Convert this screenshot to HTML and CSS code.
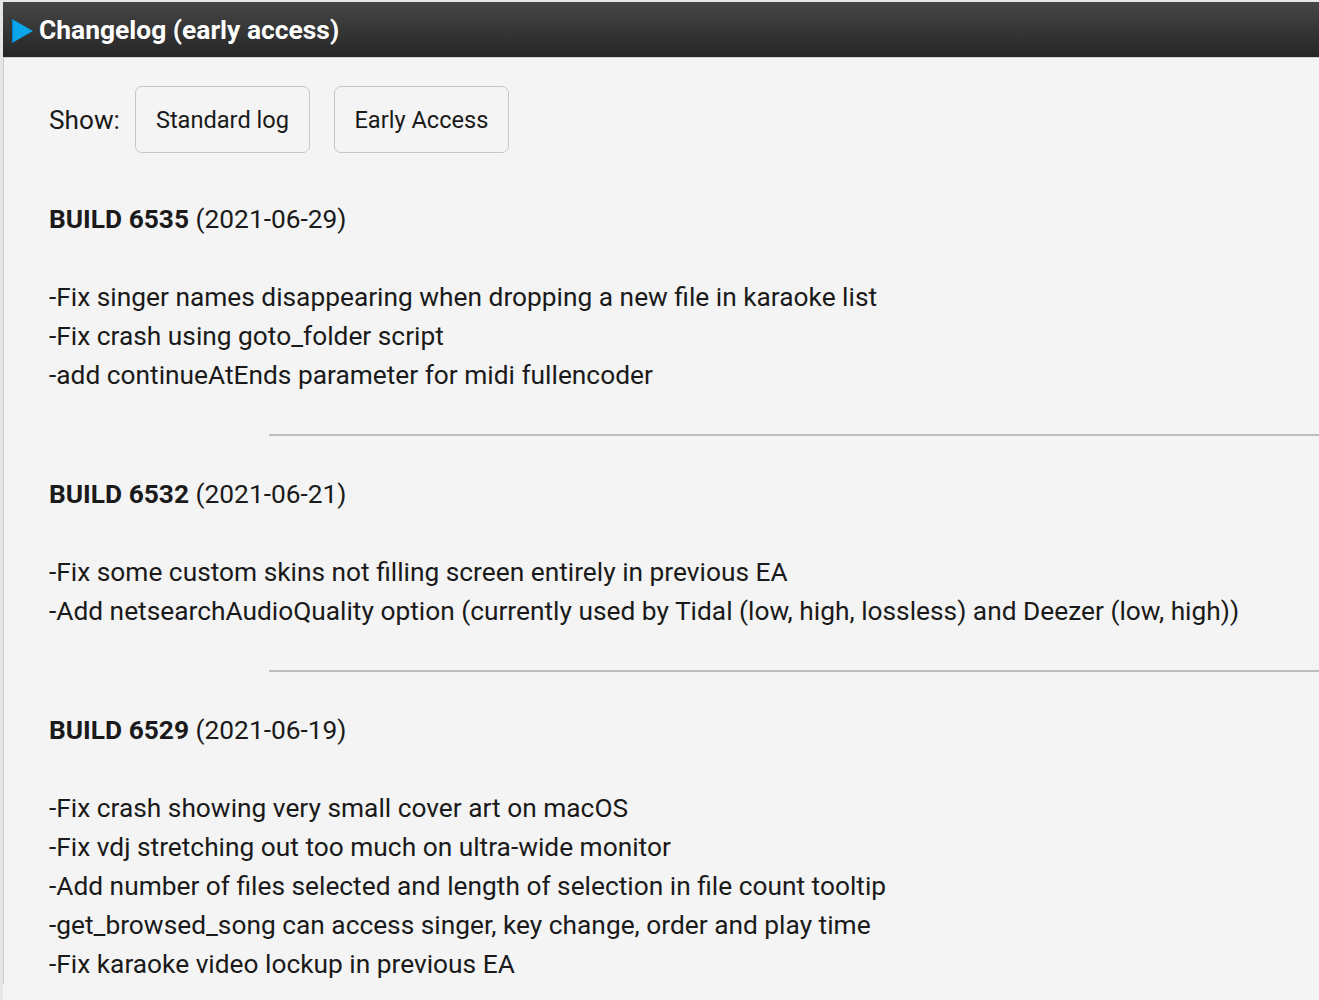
FILE: index.html
```html
<!DOCTYPE html>
<html>
<head>
<meta charset="utf-8">
<link rel="stylesheet" href="styles.css">
</head>
<body>
<div class="panel">
  <div class="header">
    <svg class="tri" width="22" height="24" viewBox="0 0 22 24"><polygon points="0,0 21,12 0,24" fill="#0aa6ea"/><rect x="0" y="0" width="1.2" height="24" fill="#0a7fd0"/></svg>
    <span class="title">Changelog (early access)</span>
  </div>
  <div class="content">
    <div class="show">
      <span class="show-label">Show:</span>
      <button class="btn">Standard log</button>
      <button class="btn">Early Access</button>
    </div>
    <div class="build first">
      <p class="head"><b>BUILD 6535</b> (2021-06-29)</p>
      <p class="items">-Fix singer names disappearing when dropping a new file in karaoke list<br>-Fix crash using goto_folder script<br>-add continueAtEnds parameter for midi fullencoder</p>
    </div>
    <hr class="sep">
    <div class="build">
      <p class="head"><b>BUILD 6532</b> (2021-06-21)</p>
      <p class="items">-Fix some custom skins not filling screen entirely in previous EA<br>-Add netsearchAudioQuality option (currently used by Tidal (low, high, lossless) and Deezer (low, high))</p>
    </div>
    <hr class="sep">
    <div class="build">
      <p class="head"><b>BUILD 6529</b> (2021-06-19)</p>
      <p class="items">-Fix crash showing very small cover art on macOS<br>-Fix vdj stretching out too much on ultra-wide monitor<br>-Add number of files selected and length of selection in file count tooltip<br>-get_browsed_song can access singer, key change, order and play time<br>-Fix karaoke video lockup in previous EA</p>
    </div>
  </div>
</div>
</body>
</html>
```

FILE: styles.css
```css
html, body {
  margin: 0;
  padding: 0;
  background: #e6e6e6;
  overflow: hidden;
}
body {
  padding: 2px 0 0 3px;
  font-family: Roboto, "Liberation Sans", sans-serif;
  color: #1a1a1a;
}
.panel {
  background: #f4f4f4;
  min-height: 1000px;
}
.header {
  height: 56px;
  background: linear-gradient(#464646, #262626);
  border-bottom: 1px solid #cfcfcf;
  display: flex;
  align-items: center;
  padding-left: 9px;
  box-sizing: border-box;
}
.tri {
  display: block;
  margin-right: 5px;
  margin-top: 2px;
}
.title {
  color: #fff;
  font-weight: bold;
  font-size: 26.4px;
}
.content {
  border-left: 1px solid #cdcdcd;
  padding: 28px 0 0 45px;
}
.show {
  display: flex;
  align-items: center;
  font-size: 26.2px;
}
.show-label {
  margin-right: 15px;
}
.btn {
  font-family: Roboto, "Liberation Sans", sans-serif;
  font-size: 23.6px;
  color: #1a1a1a;
  background: #f4f4f4;
  border: 1px solid #c6c6c6;
  border-radius: 7px;
  height: 67px;
  width: 175px;
  padding: 0;
  margin-right: 24px;
}
.build {
  padding-top: 39px;
}
.build.first {
  padding-top: 47px;
}
.build p {
  margin: 0;
  font-size: 26.3px;
  line-height: 39px;
}
.build .head {
  margin-bottom: 39px;
}
.sep {
  border: 0;
  height: 2px;
  background: #bdbdbd;
  margin: 39px 0 0 220px;
}
```
